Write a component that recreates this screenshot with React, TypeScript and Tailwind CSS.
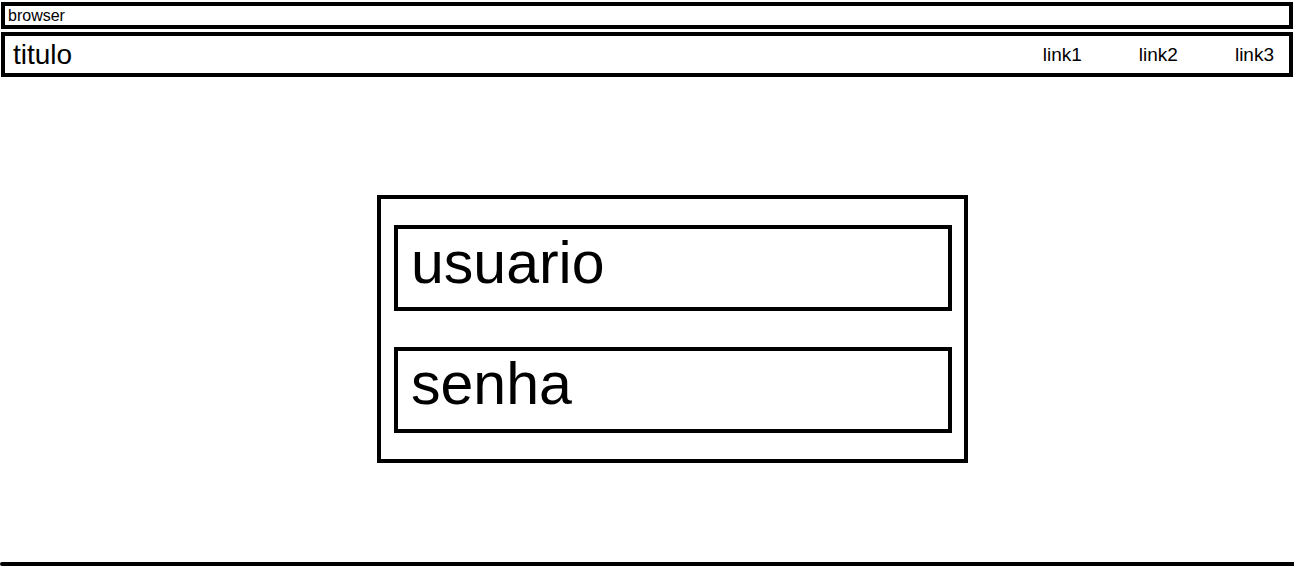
export default function App() {
  return (
    <div className="min-h-[586px] bg-white flex flex-col text-black font-['Liberation_Sans',Arial,sans-serif]">
      {/* Browser bar */}
      <div className="mx-[1px] mt-[2px] h-[27px] border-4 border-black flex items-center pl-[3px] text-[16px] leading-none">
        browser
      </div>

      {/* Header */}
      <header className="mx-[1px] mt-[3px] h-[45px] border-4 border-black flex items-center justify-between pl-[8px] pr-[15px]">
        <span className="text-[28px] leading-none">titulo</span>
        <nav className="flex gap-[57px] text-[19px] leading-none">
          <a>link1</a>
          <a>link2</a>
          <a>link3</a>
        </nav>
      </header>

      {/* Login box */}
      <main className="pt-[118px]">
        <div className="ml-[377px] w-[591px] h-[268px] border-4 border-black pt-[26px] pl-[13px] pr-[12px] flex flex-col gap-[36px]">
          <div className="h-[86px] border-4 border-black pt-[5px] pl-[13px] text-[59px] leading-none">
            usuario
          </div>
          <div className="h-[86px] border-4 border-black pt-[4px] pl-[13px] text-[59px] leading-none">
            senha
          </div>
        </div>
      </main>

      {/* Footer line */}
      <div className="mt-[99px] h-[4px] bg-black rounded-l-sm" />
    </div>
  );
}
